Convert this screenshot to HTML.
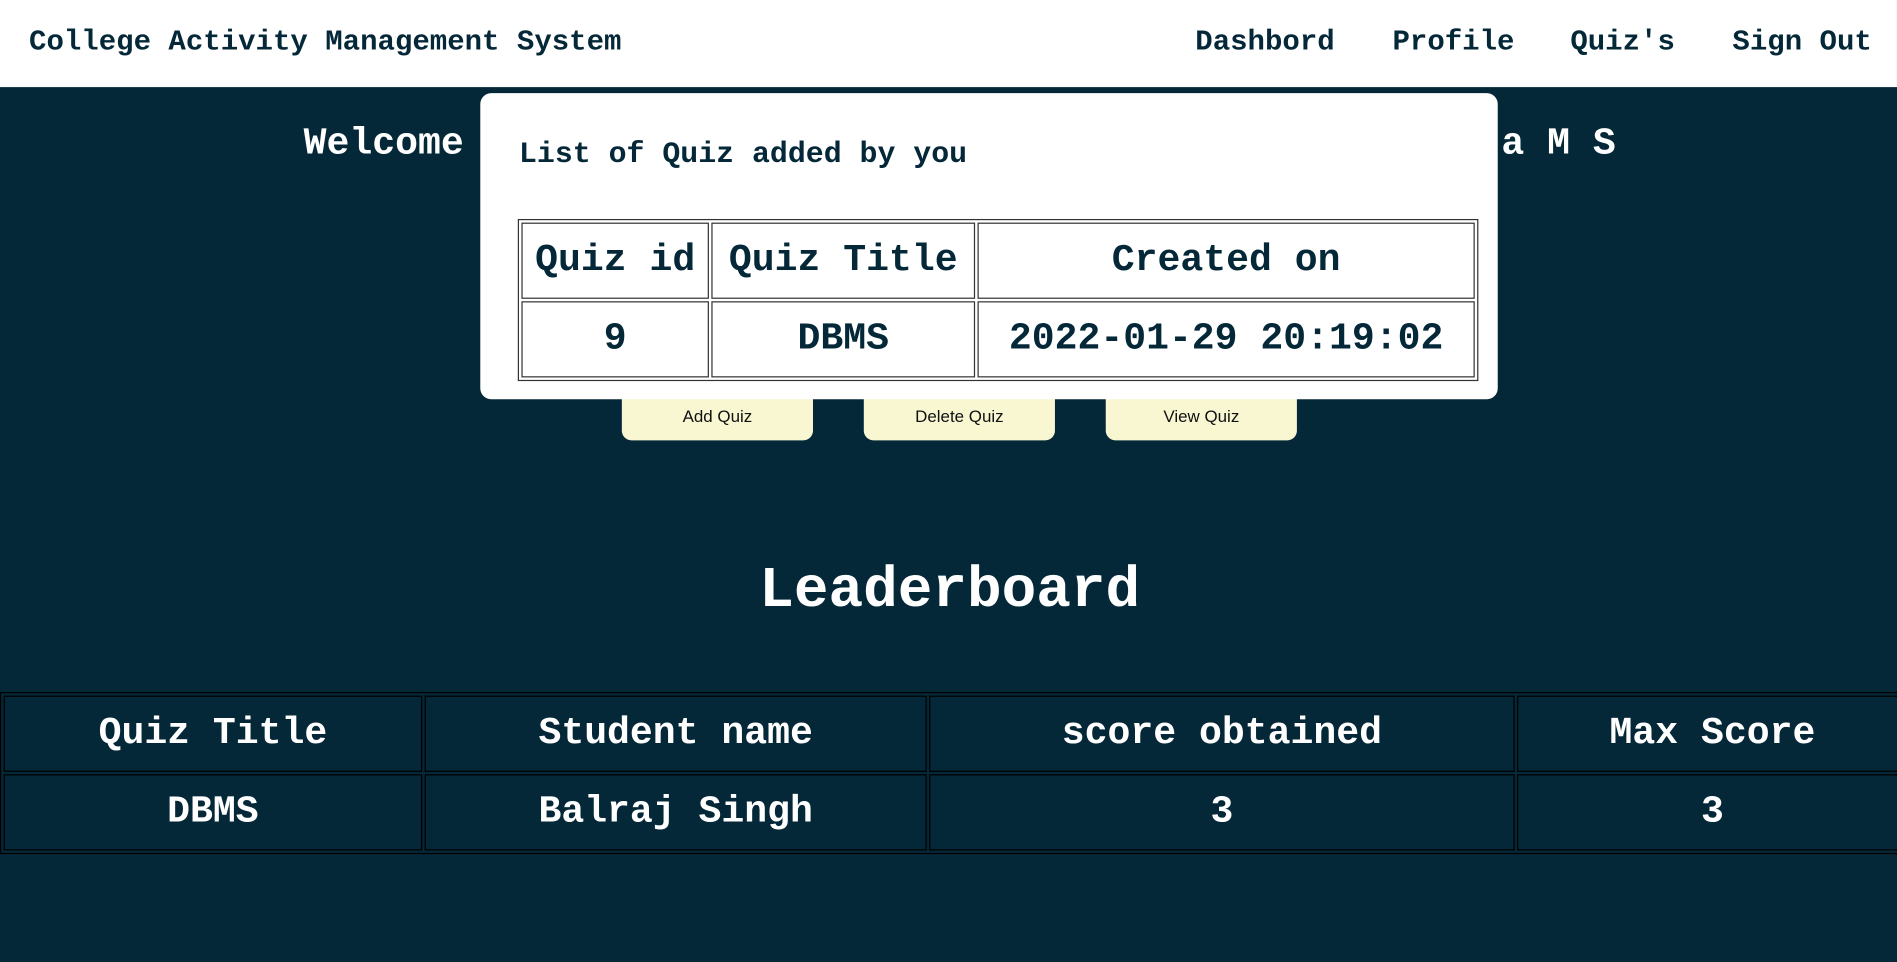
<!DOCTYPE html>
<html><head><meta charset="utf-8"><style>
html,body{margin:0;padding:0;width:1897px;height:962px;overflow:hidden;background:#052839;}
#w{position:absolute;left:0;top:0;width:1568px;height:795px;transform:scale(1.2098);transform-origin:0 0;font-family:"Liberation Mono","Courier New",monospace;font-weight:bold;}
.a{position:absolute;white-space:nowrap;}
#hdr{position:absolute;left:0;top:0;width:1568px;height:72px;background:#fff;color:#052839;font-size:24px;}
#modal{position:absolute;left:397px;top:77px;width:841px;height:253px;background:#fff;border-radius:9px;z-index:5;}
table{border-collapse:separate;border-spacing:2px;position:absolute;}
td{text-align:center;padding:0;}
.mt{left:31px;top:104px;border:1px solid #333;color:#052839;font-size:31.5px;}
.mt td{border:1px solid #333;height:61px;}
.lt{left:0;top:572px;border:1px solid #000;color:#fff;font-size:31.5px;width:1580px;}
.lt td{border:1px solid #000;height:61px;}
.btn{position:absolute;top:318px;width:158px;height:46px;background:#f8f7d2;border-radius:8px;font:14px "Liberation Sans",Arial,sans-serif;color:#111;text-align:center;line-height:16px;}
.btn span{position:absolute;left:0;right:0;top:18px;}
</style></head><body><div id="w">
<div id="hdr">
<div class="a" style="left:24px;top:22px">College Activity Management System</div>
<div class="a" style="left:988px;top:22px">Dashbord</div>
<div class="a" style="left:1151px;top:22px">Profile</div>
<div class="a" style="left:1298px;top:22px">Quiz's</div>
<div class="a" style="left:1432px;top:22px">Sign Out</div>
</div>
<div class="a" style="left:251px;top:102px;font-size:31.5px;color:#fff">Welcome</div>
<div class="a" style="left:1241px;top:102px;font-size:31.5px;color:#fff">a M S</div>
<div class="btn" style="left:514px"><span>Add Quiz</span></div>
<div class="btn" style="left:714px"><span>Delete Quiz</span></div>
<div class="btn" style="left:914px"><span>View Quiz</span></div>
<div id="modal">
<div class="a" style="left:32px;top:37px;font-size:24.7px;color:#052839">List of Quiz added by you</div>
<table class="mt">
<tr><td style="width:153px">Quiz id</td><td style="width:216px">Quiz Title</td><td style="width:409px">Created on</td></tr>
<tr><td>9</td><td>DBMS</td><td>2022-01-29 20:19:02</td></tr>
</table>
</div>
<div class="a" style="left:0;width:1570px;text-align:center;top:462px;font-size:47.7px;color:#fff">Leaderboard</div>
<table class="lt">
<tr><td style="width:344px">Quiz Title</td><td style="width:413px">Student name</td><td style="width:482px">score obtained</td><td>Max Score</td></tr>
<tr><td>DBMS</td><td>Balraj Singh</td><td>3</td><td>3</td></tr>
</table>
</div></body></html>
